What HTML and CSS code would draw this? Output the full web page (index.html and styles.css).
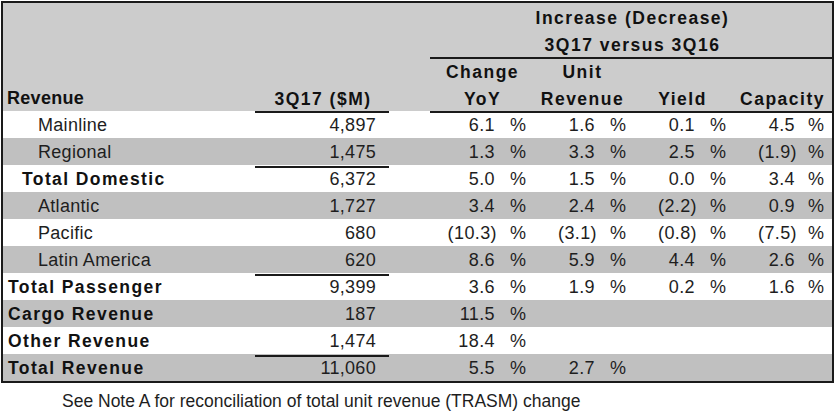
FILE: index.html
```html
<!DOCTYPE html>
<html>
<head>
<meta charset="utf-8">
<link rel="stylesheet" href="styles.css">
</head>
<body>
<div class="sheet">
  <div class="row hdr">
    <div class="hc span-all">Increase (Decrease)</div>
  </div>
  <div class="row hdr">
    <div class="hc span-all rule">3Q17 versus 3Q16</div>
  </div>
  <div class="row hdr">
    <div class="hc g1">Change</div>
    <div class="hc g2">Unit</div>
  </div>
  <div class="row hdr">
    <div class="hc lab">Revenue</div>
    <div class="hc qh rule">3Q17 ($M)</div>
    <div class="hc g1 rule">YoY</div>
    <div class="hc g2 rule">Revenue</div>
    <div class="hc g3 rule">Yield</div>
    <div class="hc g4 rule">Capacity</div>
  </div>

  <div class="row w">
    <div class="lab sub">Mainline</div><div class="q">4,897</div><div></div>
    <div class="n">6.1</div><div class="p">%</div>
    <div class="n">1.6</div><div class="p">%</div>
    <div class="n">0.1</div><div class="p">%</div>
    <div class="n">4.5</div><div class="p p4">%</div>
  </div>
  <div class="row g">
    <div class="lab sub">Regional</div><div class="q rule">1,475</div><div></div>
    <div class="n">1.3</div><div class="p">%</div>
    <div class="n">3.3</div><div class="p">%</div>
    <div class="n">2.5</div><div class="p">%</div>
    <div class="n ng">(1.9)</div><div class="p p4">%</div>
  </div>
  <div class="row w">
    <div class="lab mid">Total Domestic</div><div class="q">6,372</div><div></div>
    <div class="n">5.0</div><div class="p">%</div>
    <div class="n">1.5</div><div class="p">%</div>
    <div class="n">0.0</div><div class="p">%</div>
    <div class="n">3.4</div><div class="p p4">%</div>
  </div>
  <div class="row g">
    <div class="lab sub">Atlantic</div><div class="q">1,727</div><div></div>
    <div class="n">3.4</div><div class="p">%</div>
    <div class="n">2.4</div><div class="p">%</div>
    <div class="n ng">(2.2)</div><div class="p">%</div>
    <div class="n">0.9</div><div class="p p4">%</div>
  </div>
  <div class="row w">
    <div class="lab sub">Pacific</div><div class="q">680</div><div></div>
    <div class="n ng">(10.3)</div><div class="p">%</div>
    <div class="n ng">(3.1)</div><div class="p">%</div>
    <div class="n ng">(0.8)</div><div class="p">%</div>
    <div class="n ng">(7.5)</div><div class="p p4">%</div>
  </div>
  <div class="row g">
    <div class="lab sub">Latin America</div><div class="q rule">620</div><div></div>
    <div class="n">8.6</div><div class="p">%</div>
    <div class="n">5.9</div><div class="p">%</div>
    <div class="n">4.4</div><div class="p">%</div>
    <div class="n">2.6</div><div class="p p4">%</div>
  </div>
  <div class="row w">
    <div class="lab top">Total Passenger</div><div class="q">9,399</div><div></div>
    <div class="n">3.6</div><div class="p">%</div>
    <div class="n">1.9</div><div class="p">%</div>
    <div class="n">0.2</div><div class="p">%</div>
    <div class="n">1.6</div><div class="p p4">%</div>
  </div>
  <div class="row g">
    <div class="lab top">Cargo Revenue</div><div class="q">187</div><div></div>
    <div class="n">11.5</div><div class="p">%</div>
  </div>
  <div class="row w">
    <div class="lab top">Other Revenue</div><div class="q rule">1,474</div><div></div>
    <div class="n">18.4</div><div class="p">%</div>
  </div>
  <div class="row g">
    <div class="lab top">Total Revenue</div><div class="q">11,060</div><div></div>
    <div class="n">5.5</div><div class="p">%</div>
    <div class="n">2.7</div><div class="p">%</div>
  </div>
</div>
<p class="note">See Note A for reconciliation of total unit revenue (TRASM) change</p>
</body>
</html>
```

FILE: styles.css
```css
html, body {
  margin: 0;
  padding: 0;
  background: #ffffff;
}

body {
  font-family: "Liberation Sans", Arial, sans-serif;
  color: #1e1e1e;
}

.sheet {
  margin: 1px 1px 0 1px;
  width: 829px;
  border: 2px solid #1a1a1a;
  background: #cccccc;
}

.row {
  display: grid;
  grid-template-columns: 252px 134px 41px 67px 33px 67px 33px 67px 33px 67px 35px;
  height: 27px;
}

.row > div {
  box-sizing: border-box;
  white-space: nowrap;
}

.row.w { background: #ffffff; }
.row.g { background: #c0c0c0; }
.row.hdr { background: #cccccc; }

.hc {
  font-weight: bold;
  font-size: 17.5px;
  letter-spacing: 1.5px;
  color: #111111;
  line-height: 23px;
  padding-top: 4px;
  text-align: center;
}

.span-all { grid-column: 4 / -1; padding-left: 3px; }
.g1 { grid-column: 4 / span 2; padding-left: 5px; }
.g2 { grid-column: 6 / span 2; padding-left: 5px; }
.g3 { grid-column: 8 / span 2; padding-left: 5px; }
.g4 { grid-column: 10 / span 2; padding-left: 3px; }
.qh { grid-column: 2; padding-left: 2px; }

.hc.lab {
  grid-column: 1;
  text-align: left;
  padding-left: 4px;
}

.rule { border-bottom: 2px solid #1a1a1a; }

.lab, .q, .n, .p {
  line-height: 27px;
  padding-top: 1px;
  font-size: 18px;
  letter-spacing: 0.3px;
}

.lab.sub { padding-left: 35px; }

.lab.mid, .lab.top {
  font-weight: bold;
  font-size: 17.5px;
  letter-spacing: 1.4px;
  color: #111111;
}

.lab.mid { padding-left: 19px; }
.lab.top { padding-left: 5px; }

.q {
  text-align: right;
  padding-right: 13px;
}

.n {
  text-align: right;
  padding-right: 2px;
  letter-spacing: 0.4px;
}

.n.ng { padding-right: 0; }

.p {
  padding-left: 13px;
  letter-spacing: 0;
}

.p.p4 { padding-left: 11px; }

.note {
  margin: 0;
  padding: 8px 0 0 62px;
  font-size: 17.5px;
  line-height: 20px;
  color: #1e1e1e;
}
```
